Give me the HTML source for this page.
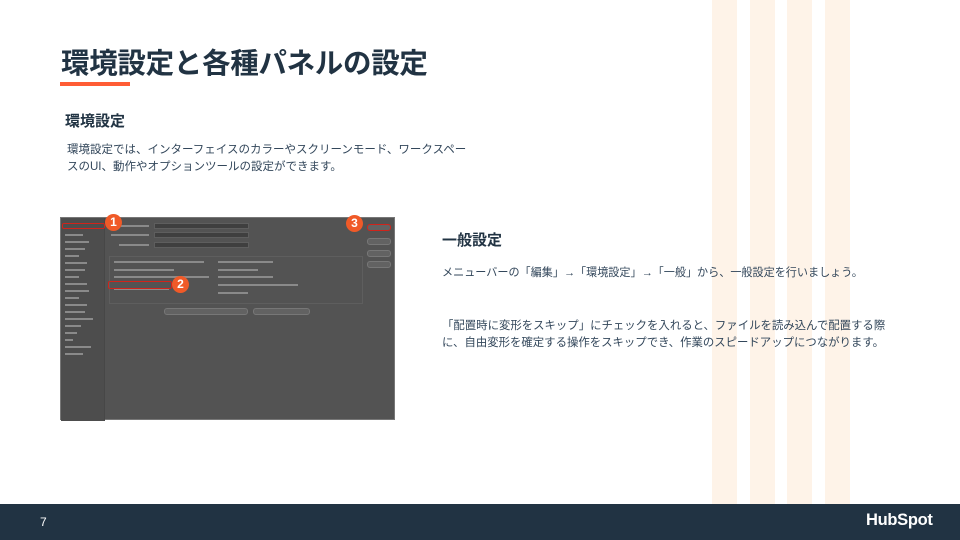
<!DOCTYPE html>
<html><head><meta charset="utf-8"><style>
*{margin:0;padding:0;box-sizing:border-box}
body{width:960px;height:540px;position:relative;background:#fff;overflow:hidden;font-family:"Liberation Sans","Noto Sans CJK JP",sans-serif;color:#213343}
.s{position:absolute;top:0;width:25px;height:504px;background:#fef3e8}
.a{position:absolute;white-space:nowrap}
.ft{position:absolute;left:0;top:504px;width:960px;height:36px;background:#213343}
.img{position:absolute;left:60px;top:217px;width:335px;height:203px;background:#535353;border:1px solid #777}
.side{position:absolute;left:0;top:0;width:44px;height:203px;background:#4d4d4d;border-right:1px solid #474747}
.r{position:absolute;border:1.5px solid #d0241b;border-radius:2px}
.n{position:absolute;width:17px;height:17px;border-radius:50%;background:#f05a28;color:#fff;font-size:12px;font-weight:bold;text-align:center;line-height:17px}
.ln{position:absolute;height:2px;background:#8a8a8a}
.fl{position:absolute;height:6px;background:#3f3f3f;border:1px solid #5e5e5e}
.bt{position:absolute;height:7px;background:#626262;border-radius:3px;border:1px solid #777}
</style></head><body>
<div class="s" style="left:712px"></div><div class="s" style="left:750px"></div><div class="s" style="left:787px"></div><div class="s" style="left:825px"></div>
<div class="a" style="left:61px;top:41px;font-size:28.5px;font-weight:bold;letter-spacing:-0.3px">環境設定と各種パネルの設定</div>
<div style="position:absolute;left:60px;top:82px;width:70px;height:4px;background:#ff5c35"></div>
<div class="a" style="left:65px;top:110px;font-size:15px;font-weight:bold">環境設定</div>
<div class="a" style="left:67px;top:142px;font-size:11.5px;line-height:17px;color:#33475b">環境設定では、インターフェイスのカラーやスクリーンモード、ワークスペー<br>スのUI、動作やオプションツールの設定ができます。</div>
<div class="a" style="left:442px;top:229px;font-size:15px;font-weight:bold">一般設定</div>
<div class="a" style="left:442px;top:264px;font-size:11.1px;color:#33475b">メニューバーの「編集」→「環境設定」→「一般」から、一般設定を行いましょう。</div>
<div class="a" style="left:442px;top:318px;font-size:11.4px;line-height:17px;color:#33475b">「配置時に変形をスキップ」にチェックを入れると、ファイルを読み込んで配置する際<br>に、自由変形を確定する操作をスキップでき、作業のスピードアップにつながります。</div>
<div class="img">
<div class="side"></div>
<div class="ln" style="left:4px;top:16px;width:18px"></div><div class="ln" style="left:4px;top:23px;width:24px"></div><div class="ln" style="left:4px;top:30px;width:20px"></div><div class="ln" style="left:4px;top:37px;width:14px"></div><div class="ln" style="left:4px;top:44px;width:22px"></div><div class="ln" style="left:4px;top:51px;width:20px"></div><div class="ln" style="left:4px;top:58px;width:14px"></div><div class="ln" style="left:4px;top:65px;width:22px"></div><div class="ln" style="left:4px;top:72px;width:24px"></div><div class="ln" style="left:4px;top:79px;width:14px"></div><div class="ln" style="left:4px;top:86px;width:22px"></div><div class="ln" style="left:4px;top:93px;width:20px"></div><div class="ln" style="left:4px;top:100px;width:28px"></div><div class="ln" style="left:4px;top:107px;width:16px"></div><div class="ln" style="left:4px;top:114px;width:12px"></div><div class="ln" style="left:4px;top:121px;width:8px"></div><div class="ln" style="left:4px;top:128px;width:26px"></div><div class="ln" style="left:4px;top:135px;width:18px"></div>
<div class="r" style="left:1px;top:5px;width:43px;height:6px"></div>
<div class="fl" style="left:93px;top:5px;width:95px"></div><div class="fl" style="left:93px;top:14px;width:95px"></div><div class="fl" style="left:93px;top:24px;width:95px"></div>
<div class="ln" style="left:60px;top:7px;width:28px"></div><div class="ln" style="left:50px;top:16px;width:38px"></div><div class="ln" style="left:58px;top:26px;width:30px"></div>
<div style="position:absolute;left:48px;top:38px;width:254px;height:48px;border:1px solid #5e5e5e"></div>
<div class="ln" style="left:53px;top:43px;width:90px"></div><div class="ln" style="left:53px;top:51px;width:60px"></div><div class="ln" style="left:53px;top:58px;width:95px"></div><div class="ln" style="left:53px;top:70px;width:55px"></div>
<div class="ln" style="left:157px;top:43px;width:55px"></div><div class="ln" style="left:157px;top:51px;width:40px"></div><div class="ln" style="left:157px;top:58px;width:55px"></div><div class="ln" style="left:157px;top:66px;width:80px"></div><div class="ln" style="left:157px;top:74px;width:30px"></div>
<div class="r" style="left:47px;top:63px;width:64px;height:8px"></div>
<div class="bt" style="left:103px;top:90px;width:84px"></div><div class="bt" style="left:192px;top:90px;width:57px"></div>
<div class="bt" style="left:306px;top:6px;width:24px;border-color:#d0241b"></div>
<div class="bt" style="left:306px;top:20px;width:24px"></div><div class="bt" style="left:306px;top:32px;width:24px"></div><div class="bt" style="left:306px;top:43px;width:24px"></div>
<div class="n" style="left:44px;top:-4px">1</div>
<div class="n" style="left:111px;top:58px">2</div>
<div class="n" style="left:285px;top:-3px">3</div>
</div>
<div class="ft"></div>
<div class="a" style="left:40px;top:515px;font-size:12px;color:#fff">7</div>
<div class="a" style="left:866px;top:511px;font-size:16.5px;font-weight:bold;color:#fff;letter-spacing:-0.3px">HubSpot</div>
</body></html>
